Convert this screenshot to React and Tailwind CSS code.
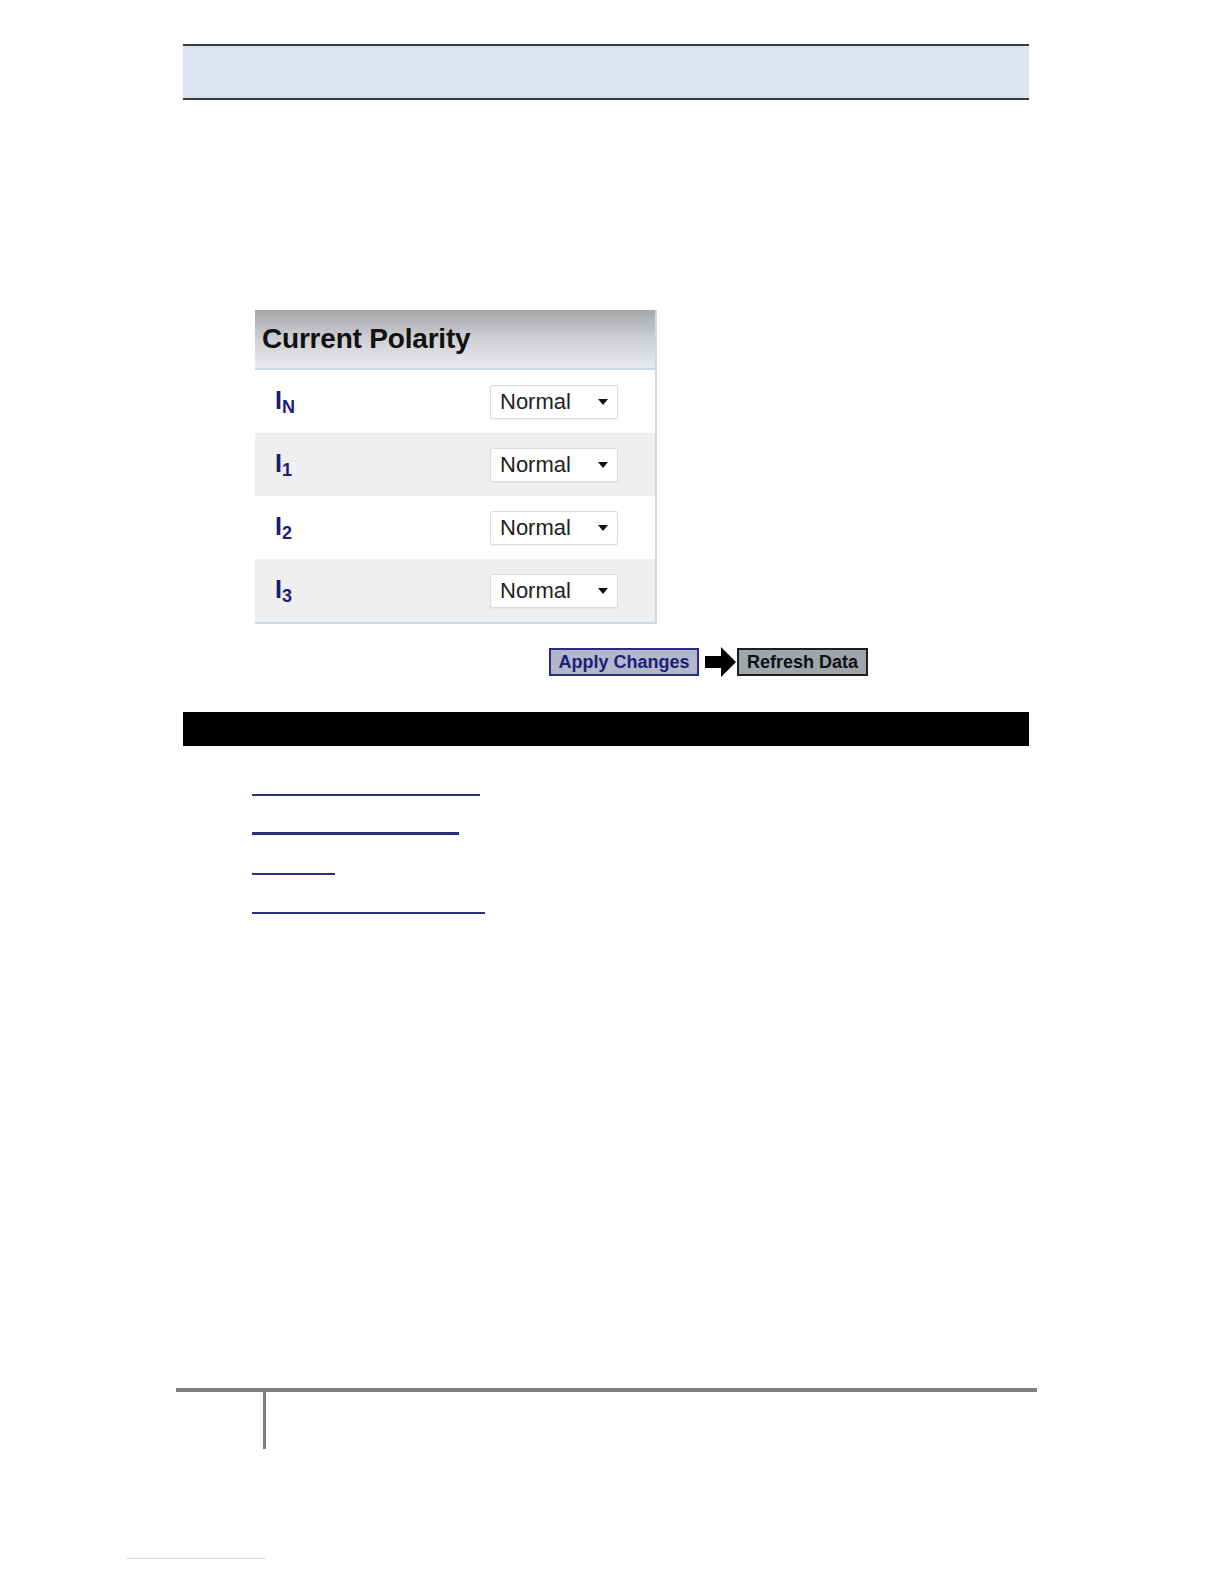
const rows = [
  { sub: "N", shade: false },
  { sub: "1", shade: true },
  { sub: "2", shade: false },
  { sub: "3", shade: true },
];

const links = [
  { w: "w-[228px]", t: "h-[2px]", mt: "mt-[48px]" },
  { w: "w-[207px]", t: "h-[3px]", mt: "mt-[36px]" },
  { w: "w-[83px]", t: "h-[2px]", mt: "mt-[38px]" },
  { w: "w-[233px]", t: "h-[2px]", mt: "mt-[37px]" },
];

function PolaritySelect() {
  return (
    <div className="flex h-[34px] w-[128px] items-center justify-between rounded-[2px] border border-[#dcdcdc] bg-white pl-[9px] pr-[9px] shadow-[0_1px_1px_rgba(0,0,0,0.05)]">
      <span className="text-[22px] leading-none text-[#222]">Normal</span>
      <svg width="10" height="6" viewBox="0 0 10 6">
        <path d="M0 0 L10 0 L5 6 Z" fill="#111" />
      </svg>
    </div>
  );
}

export default function App() {
  return (
    <div className="bg-white pb-[20px] font-['Liberation_Sans',Arial,sans-serif]">
      {/* header band */}
      <div className="pt-[44px]">
        <div className="ml-[183px] h-[56px] w-[846px] border-t-2 border-b-2 border-[#3a3a3a] bg-[#dce6f1]" />
      </div>

      {/* polarity panel */}
      <div className="ml-[255px] mt-[210px] w-[402px] border-r-2 border-[#c9d7ea]">
        <div className="flex h-[60px] items-center border-b-2 border-[#c9d7ea] bg-gradient-to-b from-[#a4a6a8] via-[#cfd0d3] to-[#eaebef] pl-[7px]">
          <h2 className="text-[28px] font-bold tracking-[-0.2px] text-[#111]">Current Polarity</h2>
        </div>
        {rows.map((r) => (
          <div
            key={r.sub}
            className={`flex h-[63px] items-center justify-between pl-[20px] pr-[37px] ${r.shade ? "bg-[#efefef]" : "bg-white"}`}
          >
            <span className="font-bold text-[#1c1c78]">
              <span className="text-[25px] leading-none">I</span>
              <sub className="text-[18px] leading-none">{r.sub}</sub>
            </span>
            <PolaritySelect />
          </div>
        ))}
        <div className="h-[2px] bg-[#c9d7ea]" />
      </div>

      {/* actions */}
      <div className="ml-[549px] mt-[24px] flex h-[28px] items-center">
        <button className="flex h-[28px] w-[150px] items-center justify-center border-2 border-[#2b2b85] bg-[#b3b7cc] text-[18px] font-bold text-[#1e1e78]">
          Apply Changes
        </button>
        <svg className="ml-[6px]" width="32" height="30" viewBox="0 0 32 30">
          <path d="M0 9 L16 9 L16 0 L31 15 L16 30 L16 21 L0 21 Z" fill="#000" />
        </svg>
        <button className="flex h-[28px] w-[131px] items-center justify-center border-2 border-[#1e1e1e] bg-[#9ea5ab] text-[18px] font-bold text-[#111]">
          Refresh Data
        </button>
      </div>

      {/* black bar */}
      <div className="ml-[183px] mt-[36px] h-[34px] w-[846px] bg-black" />

      {/* links */}
      <div className="ml-[252px]">
        {links.map((l, i) => (
          <div key={i} className={`${l.mt} ${l.w} ${l.t} bg-[#2e2e78]`} />
        ))}
      </div>

      {/* footer rule */}
      <div className="ml-[176px] mt-[474px] h-[4px] w-[861px] bg-[#808080]" />
      <div className="ml-[263px] h-[57px] w-[3px] bg-[#808080]" />

      <div className="ml-[126px] mt-[109px] h-[1px] w-[140px] bg-[#d4d8e6]" />
    </div>
  );
}
